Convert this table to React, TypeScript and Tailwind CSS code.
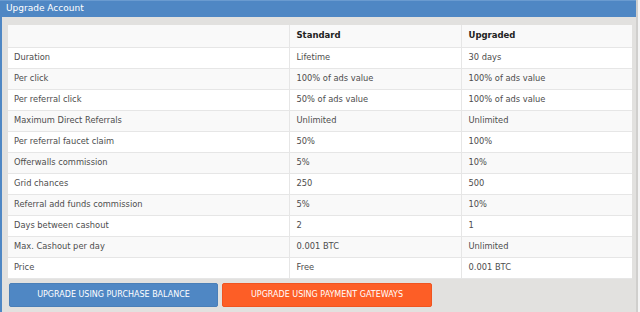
import React from 'react';

const rows: [string, string, string][] = [
  ['Duration', 'Lifetime', '30 days'],
  ['Per click', '100% of ads value', '100% of ads value'],
  ['Per referral click', '50% of ads value', '100% of ads value'],
  ['Maximum Direct Referrals', 'Unlimited', 'Unlimited'],
  ['Per referral faucet claim', '50%', '100%'],
  ['Offerwalls commission', '5%', '10%'],
  ['Grid chances', '250', '500'],
  ['Referral add funds commission', '5%', '10%'],
  ['Days between cashout', '2', '1'],
  ['Max. Cashout per day', '0.001 BTC', 'Unlimited'],
  ['Price', 'Free', '0.001 BTC'],
];

const App: React.FC = () => {
  return (
    <div className="w-[640px] h-[312px] bg-[#f4f4f4] overflow-hidden" style={{ fontFamily: '"DejaVu Sans", sans-serif' }}>
      <div className="w-[638px] h-[312px] flex flex-col border-l-2 border-[#4f87c4] border-r-2 border-r-[#d0cfcd] bg-[#e2e1df]">
        <div className="h-[17px] bg-[#4f87c4] border-t border-[#6a9bd0] flex items-center text-[9px] text-white -ml-[2px] pl-[6px]">
          Upgrade Account
        </div>
        <div className="px-[6px] pt-[8px]">
          <table className="w-[624px] border-collapse bg-white text-[8.3px] text-[#4d4d4d]">
            <tbody>
              <tr className="h-[22px] bg-[#f9f9f9] font-bold text-[8.5px] text-[#222]">
                <td className="w-[281px] px-[6px] border-b border-[#e6e6e6]"></td>
                <td className="w-[172px] px-[7px] border-l border-b border-[#e6e6e6]">Standard</td>
                <td className="px-[7px] border-l border-b border-[#e6e6e6]">Upgraded</td>
              </tr>
              {rows.map(([a, b, c], i) => (
                <tr key={a} className={`h-[21px] ${i % 2 === 1 ? 'bg-[#f9f9f9]' : 'bg-white'}`}>
                  <td className="px-[6px] border-b border-[#e6e6e6]">{a}</td>
                  <td className="px-[7px] border-l border-b border-[#e6e6e6]">{b}</td>
                  <td className="px-[7px] border-l border-b border-[#e6e6e6]">{c}</td>
                </tr>
              ))}
            </tbody>
          </table>
          <div className="flex gap-[4px] mt-[4px] pl-[1px]">
            <button className="w-[209px] h-[24px] bg-[#4f87c4] text-white text-[8px] uppercase rounded-[2px] border border-[#4a7fb8]">
              Upgrade using purchase balance
            </button>
            <button className="w-[210px] h-[24px] bg-[#fd5e26] text-white text-[8px] uppercase rounded-[2px] border border-[#f05420]">
              Upgrade using payment gateways
            </button>
          </div>
        </div>
      </div>
    </div>
  );
};

export default App;
